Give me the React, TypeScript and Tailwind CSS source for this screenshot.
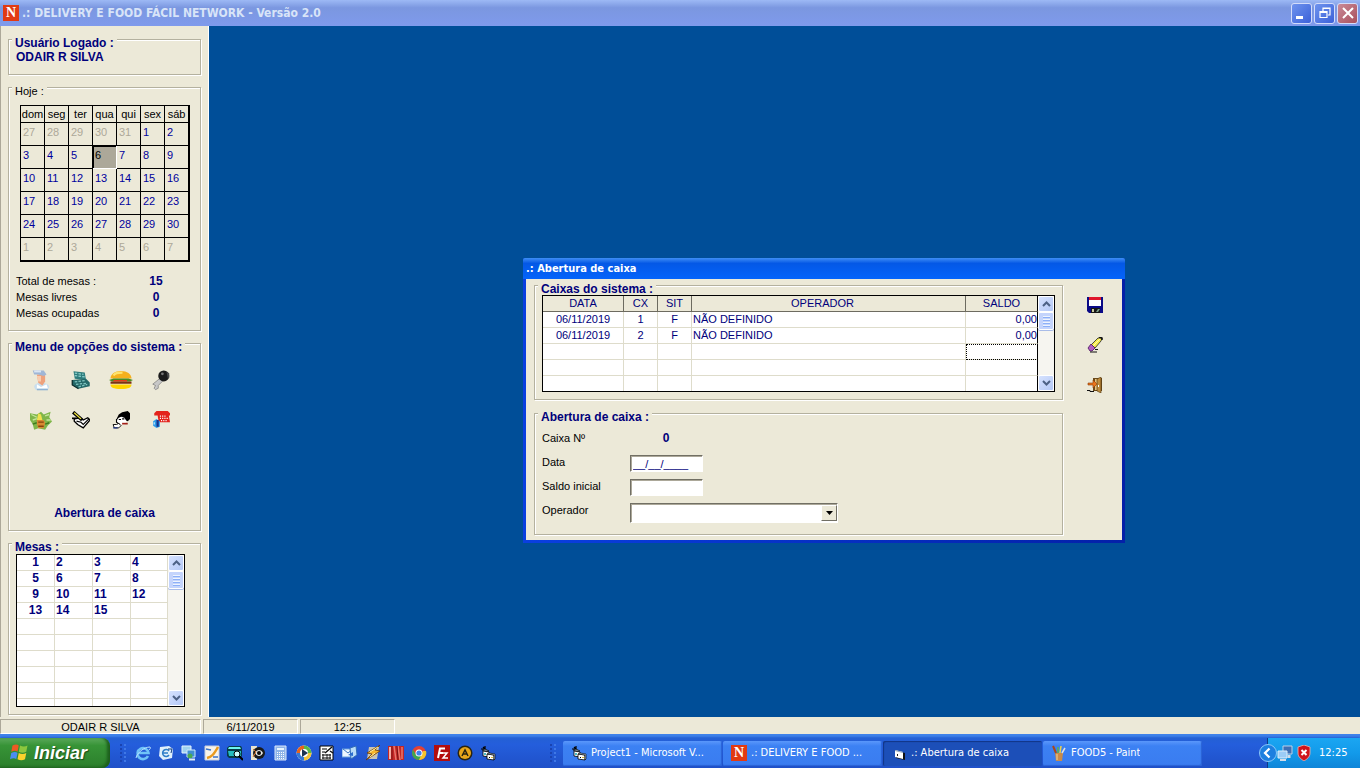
import React, { useState } from "react";

const weekDays = ["dom", "seg", "ter", "qua", "qui", "sex", "sáb"];
const weeks = [
  [27, 28, 29, 30, 31, 1, 2],
  [3, 4, 5, 6, 7, 8, 9],
  [10, 11, 12, 13, 14, 15, 16],
  [17, 18, 19, 20, 21, 22, 23],
  [24, 25, 26, 27, 28, 29, 30],
  [1, 2, 3, 4, 5, 6, 7],
];
const totals = [
  { label: "Total de mesas :", value: 15 },
  { label: "Mesas livres", value: 0 },
  { label: "Mesas ocupadas", value: 0 },
];
const tables = [
  ["1", "2", "3", "4"],
  ["5", "6", "7", "8"],
  ["9", "10", "11", "12"],
  ["13", "14", "15", ""],
  ["", "", "", ""],
  ["", "", "", ""],
  ["", "", "", ""],
  ["", "", "", ""],
  ["", "", "", ""],
  ["", "", "", ""],
];
const registers = [
  ["06/11/2019", "1", "F", "NÃO DEFINIDO", "0,00"],
  ["06/11/2019", "2", "F", "NÃO DEFINIDO", "0,00"],
  ["", "", "", "", ""],
  ["", "", "", "", ""],
  ["", "", "", "", ""],
];

function Icon({ size = 16, children }: { size?: number; children: React.ReactNode }) {
  return (
    <svg width={size} height={size} viewBox="0 0 16 16" aria-hidden="true" className="shrink-0">
      {children}
    </svg>
  );
}

const menuIcons = [
  {
    name: "Clientes",
    size: 22,
    art: (
      <>
        <path d="M3 13c0-2 3-3 5-3s6 1 6 3l-1 2H4z" fill="#c9deee" />
        <path d="M5 4h6v5l-2 3-3-2z" fill="#eea27c" />
        <path d="M5 5h3v4H6z" fill="#f8cdb0" />
        <path d="M2 1h8l2 3-2 1-4-1H3z" fill="#9fb6d6" />
        <path d="M3 1h5v1.500H3z" fill="#dbe6f4" />
        <path d="M5 11l3 2 4-2 1 3H5z" fill="#fff" />
        <path d="M5 15h8" stroke="#8fb2d2" />
      </>
    ),
  },
  {
    name: "Caixa",
    size: 20,
    art: (
      <>
        <path d="M2 1l9 1 1 6-9-1z" fill="#2e7c7c" />
        <path d="M3 2.500l7 1M3 4.500l8 1" stroke="#8cd0cc" strokeDasharray="2 1" />
        <path d="M1 8l11-1 3 3v3l-9 2-5-3z" fill="#246868" />
        <path d="M3 9.500l8-1M4 11.500l9-1M6 13.500l7-2" stroke="#7fc4c0" strokeDasharray="2 1" />
        <path d="M1 8v4l5 3" stroke="#0b2b2b" fill="none" />
      </>
    ),
  },
  {
    name: "Produtos",
    size: 24,
    art: (
      <>
        <path d="M1 7c0-3 3-5 7-5s7 2 7 5z" fill="#f5b01d" />
        <path d="M3 5c1-2 3-2 6-2" stroke="#ffe36b" strokeWidth="1.500" fill="none" />
        <path d="M0 8l3-1h10l3 1-2 1H2z" fill="#4c8c22" />
        <path d="M1 9h14v1.500H1z" fill="#7b3310" />
        <path d="M3 8.500h9" stroke="#e33b18" />
        <path d="M1 11h14c0 2-2 3-7 3s-7-1-7-3z" fill="#ffd400" />
      </>
    ),
  },
  {
    name: "Senhas",
    size: 22,
    art: (
      <>
        <path d="M7 7l3 1-4 4v2l-2 1-1-1 1-2-2-1z" fill="#c8c8c8" stroke="#777" strokeWidth=".5" />
        <circle cx="10" cy="5" r="4" fill="#1b1b1b" />
        <path d="M12 2l2 1v3l-1 1z" fill="#4a4a4a" />
        <circle cx="9" cy="3.500" r="1" fill="#777" />
      </>
    ),
  },
  {
    name: "Pagamentos",
    size: 22,
    art: (
      <>
        <path d="M0 3l5 1 3-2 2 2 5-2-1 4 2 3-3 3-2 3-5-1-3 1-1-4-2-3z" fill="#7fb64a" />
        <path d="M1 4l4 2M2 8l3-1M11 5l3-1M12 8l3 0" stroke="#c5e59a" />
        <path d="M2 11l3-1M11 11l3-1" stroke="#3d7a20" />
        <path d="M6 3l2 1 1 4H5z" fill="#efe04e" />
        <path d="M5 8h5l1 2-1 4H6l-1-3z" fill="#d98a32" />
        <path d="M6 9.500h4M6 12.500h4" stroke="#87450f" />
      </>
    ),
  },
  {
    name: "Pedidos",
    size: 18,
    art: (
      <>
        <path d="M2 7l5-1 3 2 4-2 2 2-6 7-5-3-3-3z" fill="#fff" stroke="#000" strokeWidth="1.200" />
        <path d="M4 9l4 1 2 2 5-5" stroke="#000" fill="none" />
        <path d="M1 1l8 7" stroke="#000" strokeWidth="3" />
        <path d="M2 1.500l6 5.500" stroke="#f2e63a" strokeWidth="1.200" />
        <path d="M0 6.500h4" stroke="#000" strokeWidth="1.500" />
      </>
    ),
  },
  {
    name: "Entregas",
    size: 18,
    art: (
      <>
        <path d="M4 7l2-4 3-2 5-1 2 2v5l-2 2-3-1-2-3-3 1-2 3z" fill="#000" />
        <path d="M5 7l3-2 3 1 2 3-2 3H7L4 10z" fill="#fff" />
        <path d="M4 7v3l3 2" stroke="#000" fill="none" />
        <path d="M6 7.500h2M9 7h2" stroke="#000" />
        <path d="M9 10.500h5v1.500H9z" fill="#a22018" />
        <path d="M1 12h3l2-1 2 2-2 2H2z" fill="#fff" stroke="#000" strokeWidth=".8" />
        <path d="M1 15h4" stroke="#16328e" />
      </>
    ),
  },
  {
    name: "Telefones",
    size: 18,
    art: (
      <>
        <path d="M2 2l2-2h10l2 2v2h-1l1 6H6L5 4H2z" fill="#e3231b" />
        <path d="M7 4.500h6M7 6.500h7M8 8.500h6" stroke="#fff" strokeDasharray="1 1" />
        <path d="M1 9l3-2 3 2v5l-3 1-3-2z" fill="#2f9be8" />
        <path d="M4 8h2v6H4z" fill="#17308c" />
        <path d="M2 10v2" stroke="#bfeaff" />
      </>
    ),
  },
];

const actions = [
  {
    name: "Gravar",
    art: (
      <>
        <path d="M0 0h16v16H2l-2-2z" fill="#0a0a86" />
        <path d="M2 1h12v8H2z" fill="#fff" />
        <path d="M2 0h12v3H2z" fill="#e0162b" />
        <path d="M4 11h9v5H4z" fill="#161616" />
        <path d="M5 12h2v3H5z" fill="#c8c8a0" />
        <path d="M9 15l2-3h2l-2 3z" fill="#7ea08a" />
      </>
    ),
  },
  {
    name: "Limpar",
    art: (
      <>
        <path d="M4 8l7-7h4l-1 3-6 7z" fill="#f5ec4c" stroke="#222" strokeWidth=".8" />
        <path d="M6 9l7-7" stroke="#fff9b0" />
        <path d="M12 0l3 1v2" stroke="#111" strokeWidth="1.500" fill="none" />
        <path d="M1 11l3-4 4 4-3 3H3z" fill="#b25ec2" stroke="#4a1360" strokeWidth=".8" />
        <path d="M3 15h7M8 12.500h3" stroke="#111" />
      </>
    ),
  },
  {
    name: "Sair",
    art: (
      <>
        <path d="M6 1h9v13H6z" fill="#6b4a1b" />
        <path d="M8 2h5v11H8z" fill="#e8c37e" />
        <path d="M10 2l4-2v16l-4-2z" fill="#c08c3c" stroke="#4c3008" strokeWidth=".6" />
        <path d="M1 6h5V3l4 4-4 4V8H1z" fill="#e8741c" stroke="#8b3a04" strokeWidth=".6" />
        <path d="M0 13.500h3v1h4" stroke="#111" fill="none" />
        <path d="M11.500 8v2" stroke="#fff" />
      </>
    ),
  },
];

const vbIcon = (
  <>
    <path d="M1 4h4M3 2l3 3M5 1v4" stroke="#000" strokeWidth="1.200" />
    <path d="M2 5l3-1 4 2-3 1z" fill="#7d8890" stroke="#000" strokeWidth=".6" />
    <path d="M3 6l6 1v5l-6-1z" fill="#fff" stroke="#000" strokeWidth=".8" />
    <path d="M4 8h2v2H4z" fill="#49bcc4" />
    <path d="M7 9l7 1v5l-7-1z" fill="#fff" stroke="#000" strokeWidth=".8" />
    <path d="M7 9l2-1 6 1v5l-1 1v-5z" fill="#cfd6da" stroke="#000" strokeWidth=".6" />
    <path d="M9 12h1v1H9z" fill="#000" />
    <path d="M11 12h2v1h-2z" fill="#d8b93a" />
  </>
);

const quickLaunch = [
  {
    name: "Internet Explorer",
    art: (
      <>
        <path d="M13 11a5.500 5.500 0 1 1 .5-3H4" stroke="#6fc3f8" strokeWidth="2.600" fill="none" />
        <path d="M1 13C2 8 9 2 15 2c1 1 0 2-1 3" stroke="#b8e2ff" strokeWidth="1" fill="none" />
      </>
    ),
  },
  {
    name: "Outlook",
    art: (
      <>
        <path d="M2 2l9-1 4 3-1 9-9 2-4-4z" fill="#dff0fb" />
        <path d="M11 6a3.500 3.500 0 1 0 0 4M5 8h5" stroke="#2d7dc8" strokeWidth="1.500" fill="none" />
        <path d="M10 4h4l-1 4" stroke="#123d80" fill="none" />
      </>
    ),
  },
  {
    name: "Rede",
    art: (
      <>
        <path d="M1 1h9v7H1z" fill="#9fd2ef" stroke="#e4f4ff" />
        <path d="M6 5h8v7H6z" fill="#3f8fd2" stroke="#cde9fb" />
        <circle cx="9" cy="11" r="2.500" fill="#49a852" />
        <path d="M8 14.500h6" stroke="#dcecf5" strokeWidth="2" />
      </>
    ),
  },
  {
    name: "Editor",
    art: (
      <>
        <path d="M1 1h14v14H1z" fill="#f7f3ea" stroke="#c6cede" />
        <path d="M3 13C8 12 10 9 14 2" stroke="#e89a1e" strokeWidth="2.500" fill="none" />
        <path d="M2 4l5 1M9 12h5" stroke="#3b73c8" strokeWidth="1.500" />
      </>
    ),
  },
  {
    name: "Pesquisa",
    art: (
      <>
        <path d="M0 3l2-2h12l1 2v8l-2 2H2l-2-2z" fill="#063b48" />
        <path d="M2 2h11l1 2H1z" fill="#6df5f0" />
        <path d="M1 6h13v5H2z" fill="#25bcc0" />
        <circle cx="10" cy="9" r="3" fill="#caffff" stroke="#000" />
        <path d="M12 11l4 4" stroke="#000" strokeWidth="2" />
      </>
    ),
  },
  {
    name: "Visualizador",
    art: (
      <>
        <path d="M1 1h6v14H1z" fill="#e9e4d0" />
        <circle cx="9" cy="8" r="6" fill="#1a1a1a" />
        <path d="M5 8c2-4 6-4 8 0-2 4-6 4-8 0z" fill="#e9e9e9" />
        <circle cx="9" cy="8" r="2" fill="#0b0b0b" />
        <path d="M3 4l3 3-3 5" stroke="#d3732a" fill="none" />
      </>
    ),
  },
  {
    name: "Calculadora",
    art: (
      <>
        <path d="M2 1h11v14H2z" fill="#8fb4e8" stroke="#dbe8fb" />
        <path d="M4 3h7v2H4z" fill="#e8f6ff" />
        <path d="M4 7.500h7M4 9.500h7M4 11.500h7M4 13.500h7" stroke="#fff" strokeDasharray="1 1" />
      </>
    ),
  },
  {
    name: "Media Player",
    art: (
      <>
        <circle cx="8" cy="8" r="7.500" fill="#fff" />
        <path d="M8 .5A7.500 7.500 0 0 0 .5 8H4a4 4 0 0 1 4-4z" fill="#e8631a" />
        <path d="M8 .5A7.500 7.500 0 0 1 15.500 8H12a4 4 0 0 0-4-4z" fill="#58b947" />
        <path d="M8 15.500A7.500 7.500 0 0 0 15.500 8H12a4 4 0 0 1-4 4z" fill="#f2c33a" />
        <path d="M8 15.500A7.500 7.500 0 0 1 .5 8H4a4 4 0 0 0 4 4z" fill="#3579d8" />
        <path d="M6 4l6 4-6 4z" fill="#1d3450" />
      </>
    ),
  },
  {
    name: "Agenda",
    art: (
      <>
        <path d="M1 1h13v14H1z" fill="#fff" stroke="#000" />
        <path d="M3 4h5M3 7h3M3 10h9M3 13h9" stroke="#000" />
        <path d="M4 9v5M8 9v5M11 9v5" stroke="#000" strokeWidth=".8" />
        <path d="M6 8l7-6M11 6l3 2" stroke="#111" strokeWidth="1.500" />
      </>
    ),
  },
  {
    name: "Correio",
    art: (
      <>
        <path d="M0 4h11v8H0z" fill="#eef6ff" stroke="#6ba0df" />
        <path d="M1 4l5 4 5-4" stroke="#3f79c3" fill="none" />
        <path d="M8 3l6-2 1 9-6 4z" fill="#b9dcf8" stroke="#2f6bb8" />
        <path d="M6 10l5-3v4z" fill="#2b6ed0" />
      </>
    ),
  },
  {
    name: "Winamp",
    art: (
      <>
        <path d="M4 2h10l-2 12H2z" fill="#c9c4b4" />
        <path d="M15 0L2 8l5 1-6 6 14-9-5-1z" fill="#f6b52c" stroke="#6e3a05" strokeWidth=".8" />
        <path d="M13 2L5 7M10 8l-5 4" stroke="#fff0a0" />
      </>
    ),
  },
  {
    name: "Biblioteca",
    art: (
      <>
        <path d="M0 1h16v14H0z" fill="#c42626" />
        <path d="M2 2v12" stroke="#f3b0a8" strokeWidth="2" />
        <path d="M6 1l2 14M10 1l2 14M14 2v12" stroke="#e9776c" strokeWidth="1.500" />
        <path d="M4 1v14M9 1l1 14" stroke="#7a1212" />
      </>
    ),
  },
  {
    name: "Chrome",
    art: (
      <>
        <circle cx="8" cy="8" r="7" fill="#e34133" />
        <path d="M2 4.500A7 7 0 0 0 8 15l3-5H5z" fill="#3da752" />
        <path d="M15 6a7 7 0 0 1-7 9l4-9z" fill="#f6c42c" />
        <circle cx="8" cy="8" r="3.500" fill="#fff" />
        <circle cx="8" cy="8" r="2.600" fill="#3f82ee" />
      </>
    ),
  },
  {
    name: "FileZilla",
    art: (
      <>
        <path d="M0 0h16v16H0z" fill="#b30d0d" />
        <path d="M4 13L6 3.500h5M5 8h4" stroke="#fff" strokeWidth="2" fill="none" />
        <path d="M9 8h4l-4 5h5" stroke="#fff" strokeWidth="1.500" fill="none" />
      </>
    ),
  },
  {
    name: "Avast",
    art: (
      <>
        <circle cx="8" cy="8" r="7.500" fill="#2a2410" />
        <circle cx="8" cy="8" r="6" fill="#e9a61b" />
        <path d="M5 11l3-6 3 6M6 9h4" stroke="#2a2410" strokeWidth="1.500" fill="none" />
      </>
    ),
  },
  { name: "Visual Basic", art: vbIcon },
];

function LogoN({ className = "" }: { className?: string }) {
  return (
    <span
      className={`flex size-4 shrink-0 items-center justify-center bg-[#e23a12] font-['Liberation_Serif',serif] text-sm font-bold leading-4 text-white ${className}`}
    >
      N
    </span>
  );
}

function Group({ title, bold = true, className = "", children }: { title: string; bold?: boolean; className?: string; children: React.ReactNode }) {
  return (
    <section className={`border border-[#b4b19f] px-[7px] shadow-[inset_1px_1px_0_#fff,1px_1px_0_#fff] ${className}`}>
      <h2
        className={`-mt-[3px] -ml-1 w-fit bg-[#ece9d8] px-[3px] leading-3 ${
          bold ? "text-xs font-bold text-[#00007b]" : "text-[11px] text-black"
        }`}
      >
        {title}
      </h2>
      {children}
    </section>
  );
}

function ScrollArrow({ down = false }: { down?: boolean }) {
  return (
    <button
      type="button"
      aria-label={down ? "Rolar para baixo" : "Rolar para cima"}
      className="flex h-4 w-full items-center justify-center rounded-xs border border-white bg-linear-to-br from-[#d6e2fe] to-[#b4c8f6]"
    >
      <svg width="9" height="6" viewBox="0 0 9 6" aria-hidden="true">
        <path d={down ? "M1 1l3.500 3.500L8 1" : "M1 5l3.500-3.500L8 5"} stroke="#4d6185" strokeWidth="2" fill="none" />
      </svg>
    </button>
  );
}

function ScrollBar() {
  return (
    <div className="flex w-4 shrink-0 flex-col bg-[#f6f5f0]">
      <ScrollArrow />
      <div className="flex h-[18px] w-full flex-col items-center justify-center gap-px rounded-xs border border-white bg-[#c4d4fc] shadow-[0_1px_0_#a9bce8]">
        {[0, 1, 2, 3].map((i) => (
          <i key={i} className="h-0.5 w-[7px] border-t border-[#eef4fe] bg-[#8cb0f8]"></i>
        ))}
      </div>
      <div className="flex-1"></div>
      <ScrollArrow down />
    </div>
  );
}

function Calendar() {
  return (
    <table className="mt-2 ml-1 w-[170px] table-fixed border-separate border-spacing-0 border border-black text-[11px]">
      <thead>
        <tr>
          {weekDays.map((day) => (
            <th key={day} className="h-[17px] border-r border-b border-black p-0 text-center leading-4 font-normal">
              {day}
            </th>
          ))}
        </tr>
      </thead>
      <tbody>
        {weeks.map((week, w) => (
          <tr key={w}>
            {week.map((day, d) => {
              const outside = (w == 0 && day > 20) || w == 5;
              const today = w == 1 && day == 6;
              return (
                <td
                  key={d}
                  className={`h-[23px] border-r border-b p-0 pl-0.5 align-top leading-[18px] ${
                    today
                      ? "border-white bg-[#aca899] text-black shadow-[inset_1px_1px_0_#000]"
                      : outside
                        ? "border-black text-[#aca899]"
                        : "border-black text-[#00009c]"
                  }`}
                >
                  {day}
                </td>
              );
            })}
          </tr>
        ))}
      </tbody>
    </table>
  );
}

function Sidebar() {
  return (
    <aside className="flex w-[209px] shrink-0 flex-col gap-3 border-r border-l border-r-white border-l-[#aca899] bg-[#ece9d8] pt-[13px] pr-[7px] pb-0.5 pl-[7px]">
      <Group title="Usuário Logado :" className="pb-[9px]">
        <p className="text-xs leading-4 font-bold text-[#00007b]">ODAIR R SILVA</p>
      </Group>
      <Group title="Hoje :" bold={false} className="pb-[9px]">
        <Calendar />
        <dl className="mt-[11px] text-[11px] leading-4">
          {totals.map((t) => (
            <div key={t.label} className="flex">
              <dt className="w-[120px]">{t.label}</dt>
              <dd className="w-10 text-center text-xs leading-4 font-bold text-[#00007b]">{t.value}</dd>
            </div>
          ))}
        </dl>
      </Group>
      <Group title="Menu de opções do sistema :" className="pb-[9px]">
        <nav className="mt-[7px] ml-[5px] grid w-40 grid-cols-4">
          {menuIcons.map((item) => (
            <button key={item.name} type="button" aria-label={item.name} className="flex h-10 items-center justify-center">
              <Icon size={item.size}>{item.art}</Icon>
            </button>
          ))}
        </nav>
        <p className="mt-[65px] text-center text-xs leading-4 font-bold text-[#00007b]">Abertura de caixa</p>
      </Group>
      <Group title="Mesas :" className="pb-[7px]">
        <div className="mt-px flex h-[153px] w-[169px] overflow-hidden border border-black bg-white">
          <div className="flex-1">
            <table className="w-full table-fixed border-separate border-spacing-0 text-xs font-bold text-[#00007b]">
              <colgroup>
                <col className="w-[38px]" />
                <col className="w-[38px]" />
                <col className="w-[38px]" />
                <col />
              </colgroup>
              <tbody>
                {tables.map((row, r) => (
                  <tr key={r}>
                    {row.map((cell, c) => (
                      <td
                        key={c}
                        className={`h-4 border-r border-b border-[#dedccb] p-0 leading-[15px] ${c == 0 ? "text-center" : "pl-px"}`}
                      >
                        {cell}
                      </td>
                    ))}
                  </tr>
                ))}
              </tbody>
            </table>
          </div>
          <ScrollBar />
        </div>
      </Group>
    </aside>
  );
}

function RegisterTable() {
  return (
    <div className="flex h-[97px] overflow-hidden border border-black bg-white">
      <div className="flex-1">
        <table className="w-full table-fixed border-separate border-spacing-0 text-[11px] text-[#00007b]">
          <colgroup>
            <col className="w-[81px]" />
            <col className="w-[34px]" />
            <col className="w-[34px]" />
            <col />
            <col className="w-[72px]" />
          </colgroup>
          <thead>
            <tr className="bg-[#ece9d8]">
              {["DATA", "CX", "SIT", "OPERADOR", "SALDO"].map((h) => (
                <th
                  key={h}
                  className={`h-4 border-r border-b border-[#6d6b60] p-0 leading-[15px] font-normal last:border-r-black ${
                    h == "OPERADOR" ? "pr-3" : ""
                  }`}
                >
                  {h}
                </th>
              ))}
            </tr>
          </thead>
          <tbody>
            {registers.map((row, r) => (
              <tr key={r}>
                {row.map((cell, c) => (
                  <td
                    key={c}
                    className={`h-4 border-r border-b border-[#dedccb] p-0 leading-[15px] last:border-r-black ${
                      c == 3 ? "pl-px text-left" : c == 4 ? "text-right" : "text-center"
                    } ${r == 2 && c == 4 ? "outline-1 -outline-offset-1 outline-dotted outline-black" : ""}`}
                  >
                    {cell}
                  </td>
                ))}
              </tr>
            ))}
          </tbody>
        </table>
      </div>
      <ScrollBar />
    </div>
  );
}

function OpeningForm() {
  const [date, setDate] = useState("__/__/____");
  const [balance, setBalance] = useState("");
  const field =
    "mt-[5px] border border-t-[#716f64] border-r-white border-b-white border-l-[#716f64] bg-white text-[11px] text-[#00007b] shadow-[inset_1px_1px_0_#aca899]";
  return (
    <form className="mt-[3px] text-[11px] leading-6" onSubmit={(e) => e.preventDefault()}>
      <div className="flex h-6">
        <span className="w-[88px]">Caixa Nº</span>
        <output className="w-[72px] text-center text-xs leading-6 font-bold text-[#00007b]">0</output>
      </div>
      <div className="flex h-6">
        <label htmlFor="data" className="w-[88px]">Data</label>
        <input id="data" className={`${field} h-[17px] w-[73px] pl-0.5`} value={date} onChange={(e) => setDate(e.target.value)} />
      </div>
      <div className="flex h-6">
        <label htmlFor="saldo" className="w-[88px]">Saldo inicial</label>
        <input id="saldo" className={`${field} h-[17px] w-[73px] pl-0.5`} value={balance} onChange={(e) => setBalance(e.target.value)} />
      </div>
      <div className="flex h-6">
        <label htmlFor="operador" className="w-[88px]">Operador</label>
        <div className={`${field} relative h-5 w-52`}>
          <select id="operador" className="block h-full w-full appearance-none">
            <option></option>
          </select>
          <span className="pointer-events-none absolute inset-y-px right-0 flex w-4 items-center justify-center border border-t-white border-r-[#716f64] border-b-[#716f64] border-l-white bg-[#ece9d8]">
            <svg width="7" height="4" viewBox="0 0 7 4" aria-hidden="true">
              <path d="M0 0h7L3.500 4z" fill="#000" />
            </svg>
          </span>
        </div>
      </div>
    </form>
  );
}

function CashWindow() {
  return (
    <div
      role="dialog"
      aria-label="Abertura de caixa"
      className="absolute top-[232px] left-[314px] w-[602px] rounded-t-xs bg-linear-to-r from-[#0a3fe0] to-[#0420a8] px-[3px] pb-[3px]"
    >
      <div className="-mx-[3px] flex h-[21px] items-center rounded-t-xs bg-linear-to-b from-[#3d8df5] via-[#0458e6] via-25% to-[#0464fb] pt-0.5 pl-[3px]">
        <h1 className="font-['DejaVu_Sans_Condensed','DejaVu_Sans',sans-serif] text-[11px] font-bold text-white">.: Abertura de caixa</h1>
      </div>
      <div className="flex bg-[#ece9d8] pt-[6px] pb-[5px] pl-2">
        <div className="flex flex-1 flex-col gap-[13px]">
          <Group title="Caixas do sistema :" className="pb-[7px]">
            <RegisterTable />
          </Group>
          <Group title="Abertura de caixa :" className="pb-3">
            <OpeningForm />
          </Group>
        </div>
        <div className="ml-[5px] flex w-[54px] flex-col">
          {actions.map((a) => (
            <button key={a.name} type="button" aria-label={a.name} className="flex h-10 items-center justify-center">
              <Icon>{a.art}</Icon>
            </button>
          ))}
        </div>
      </div>
    </div>
  );
}

function TitleBar() {
  const btn = "flex size-[21px] items-center justify-center rounded-[3px] border border-[#d3dcfa]";
  return (
    <header className="flex h-[26px] items-center bg-linear-to-b from-[#9db9f5] via-[#7b97e0] via-30% to-[#7f9aec] pr-0.5 pl-[3px]">
      <LogoN />
      <span className="ml-[3px] flex-1 font-['DejaVu_Sans_Condensed','DejaVu_Sans',sans-serif] text-xs font-bold text-[#d8e4f8]">
        .: DELIVERY E FOOD FÁCIL NETWORK - Versão 2.0
      </span>
      <div className="flex gap-0.5">
        <button type="button" aria-label="Minimizar" className={`${btn} bg-linear-to-br from-[#6f93ee] to-[#3c60d8]`}>
          <Icon>
            <path d="M2 11h7v3H2z" fill="#fff" />
          </Icon>
        </button>
        <button type="button" aria-label="Restaurar" className={`${btn} bg-linear-to-br from-[#6f93ee] to-[#3c60d8]`}>
          <Icon>
            <path d="M6 6V3h7v7h-2M6 3.500h7" stroke="#fff" strokeWidth="1.200" fill="none" />
            <path d="M3 6.500h7v6H3zM3 7.500h7" stroke="#fff" strokeWidth="1.200" fill="none" />
          </Icon>
        </button>
        <button type="button" aria-label="Fechar" className={`${btn} bg-linear-to-br from-[#c98a98] to-[#a84f5c]`}>
          <Icon>
            <path d="M3 3l10 10M13 3L3 13" stroke="#fff" strokeWidth="2" />
          </Icon>
        </button>
      </div>
    </header>
  );
}

function StatusBar() {
  const panel = "border border-t-[#aca899] border-r-white border-b-white border-l-[#aca899] text-center";
  return (
    <div className="flex h-[17px] shrink-0 gap-0.5 bg-[#ece9d8] pt-0.5 text-[11px] leading-[14px]">
      <div className={`${panel} w-[201px]`}>ODAIR R SILVA</div>
      <div className={`${panel} w-[95px]`}>6/11/2019</div>
      <div className={`${panel} w-[95px]`}>12:25</div>
    </div>
  );
}

function Handle() {
  return (
    <div className="grid grid-cols-2 gap-0.5">
      {Array.from({ length: 10 }).map((_, i) => (
        <i key={i} className={`size-0.5 ${i % 2 == 0 ? "bg-[#1a43b0]" : "bg-[#3f78e6]"}`}></i>
      ))}
    </div>
  );
}

function TaskButton({ title, active = false, children }: { title: string; active?: boolean; children: React.ReactNode }) {
  return (
    <button
      type="button"
      className={`flex h-[25px] w-[159px] items-center gap-1 rounded-xs pl-2 text-left ${
        active
          ? "bg-[#1c4fb8] shadow-[inset_1px_1px_1px_#123585]"
          : "bg-linear-to-b from-[#5a97fb] via-[#3c81f3] via-20% to-[#3a7cf0] shadow-[inset_-1px_-1px_1px_#2a62d4]"
      }`}
    >
      {children}
      <span className="truncate">{title}</span>
    </button>
  );
}

function TaskBar() {
  return (
    <footer className="flex h-[34px] shrink-0 items-stretch bg-linear-to-b from-[#2461cf] via-[#245edc] via-30% to-[#1f50c8] font-['DejaVu_Sans_Condensed','DejaVu_Sans',sans-serif] text-[11px] text-white shadow-[inset_0_3px_2px_#3f82ea]">
      <button
        type="button"
        className="mt-1 flex w-[110px] items-center gap-1 rounded-r-lg bg-linear-to-b from-[#5aa85a] via-[#379437] via-25% to-[#2c7f2c] pl-[10px] shadow-[inset_-3px_-1px_3px_#1d5f1d]"
      >
        <Icon size={20}>
          <path d="M2 2c2-1 4-1 5 0L6 7C5 6 3 6 1 7z" fill="#ee5a24" />
          <path d="M8 2c2 1 4 1 6 0l-1 5c-2 1-4 1-6 0z" fill="#8cc63e" />
          <path d="M1 8c2-1 4-1 5 0l-1 5c-1-1-3-1-5 0z" fill="#4c8df0" />
          <path d="M7 8c2 1 4 1 6 0l-1 5c-2 1-4 1-6 0z" fill="#fbd22c" />
        </Icon>
        <span className="font-['Liberation_Sans',sans-serif] text-lg leading-6 font-bold italic text-shadow-[1px_1px_1px_#1b4d1b]">Iniciar</span>
      </button>
      <div className="flex flex-1 items-center pt-1">
        <div className="ml-[10px] flex w-[436px] items-center justify-between">
          <div className="flex items-center gap-[9px]">
            <Handle />
            <div className="flex gap-[7px]">
              {quickLaunch.map((q) => (
                <button key={q.name} type="button" aria-label={q.name}>
                  <Icon>{q.art}</Icon>
                </button>
              ))}
            </div>
          </div>
          <Handle />
        </div>
        <div className="ml-[7px] flex gap-px">
          <TaskButton title="Project1 - Microsoft V...">
            <Icon>{vbIcon}</Icon>
          </TaskButton>
          <TaskButton title=".: DELIVERY E FOOD ...">
            <LogoN />
          </TaskButton>
          <TaskButton title=".: Abertura de caixa" active>
            <Icon>
              <path d="M5 6l9 2v7l-9-2z" fill="#111" />
              <path d="M4 5l8 2v7l-8-2z" fill="#fff" />
              <path d="M4 5.500l8 2" stroke="#8fa3b8" />
              <path d="M6 9h1v2H6z" fill="#222" />
            </Icon>
          </TaskButton>
          <TaskButton title="FOOD5 - Paint">
            <Icon>
              <path d="M4 8h8l-1 8H5z" fill="#c98b4a" />
              <path d="M6 9v6" stroke="#efd09a" />
              <path d="M5 8L2 1" stroke="#a8481c" strokeWidth="2" />
              <path d="M7 8L7 2" stroke="#59b648" strokeWidth="1.500" />
              <path d="M9 8l1-7" stroke="#f0d048" strokeWidth="1.500" />
              <path d="M11 8l3-5" stroke="#e0e0e0" strokeWidth="1.500" />
            </Icon>
          </TaskButton>
        </div>
      </div>
      <div className="mt-1 flex w-[93px] items-center border-l border-[#103a86] bg-linear-to-b from-[#1ba6f2] via-[#129aea] to-[#0f85d8]">
        <button type="button" aria-label="Mostrar ícones" className="-ml-[9px] flex size-[18px] shrink-0 items-center justify-center rounded-full border border-[#8cc8f8] bg-[#1d7fe0]">
          <Icon size={12}>
            <path d="M10 2L4 8l6 6" stroke="#fff" strokeWidth="3" fill="none" />
          </Icon>
        </button>
        <div className="flex flex-1 items-center gap-[3px]">
          <Icon>
            <path d="M6 1h9v8H6z" fill="#3e6fb4" stroke="#bcd0e8" />
            <path d="M1 6h9v7H1z" fill="#9cccf6" stroke="#dcecfa" />
            <path d="M3 15h6" stroke="#d4dce8" strokeWidth="2" />
            <path d="M12 10v3" stroke="#d4dce8" strokeWidth="3" />
          </Icon>
          <Icon>
            <path d="M8 0l6 2v6c0 4-3 6-6 8-3-2-6-4-6-8V2z" fill="#d0141c" stroke="#f3b4ac" strokeWidth=".8" />
            <path d="M5.500 5l5 5M10.500 5l-5 5" stroke="#fff" strokeWidth="2" />
          </Icon>
          <time className="pl-1">12:25</time>
        </div>
      </div>
    </footer>
  );
}

function App() {
  return (
    <div className="flex min-h-screen flex-col bg-[#ece9d8] font-['Liberation_Sans',Arial,sans-serif] text-[11px] text-black">
      <TitleBar />
      <div className="flex flex-1">
        <Sidebar />
        <main className="relative flex-1 bg-[#004e98]">
          <CashWindow />
        </main>
      </div>
      <StatusBar />
      <TaskBar />
    </div>
  );
}

export default App;
